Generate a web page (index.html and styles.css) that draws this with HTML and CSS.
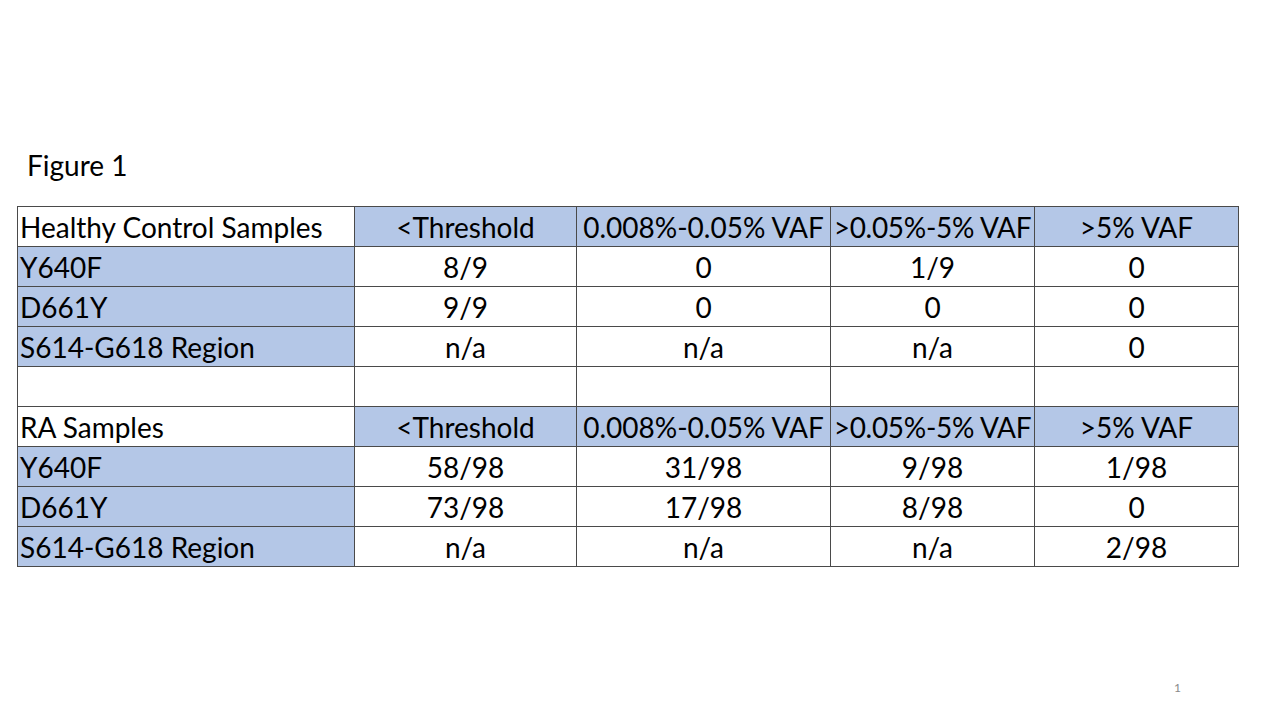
FILE: index.html
```html
<!DOCTYPE html>
<html>
<head>
<meta charset="utf-8">
<link rel="stylesheet" href="styles.css">
</head>
<body>
<div class="slide">
  <div class="title">Figure 1</div>
  <table class="data">
    <colgroup>
      <col class="c1"><col class="c2"><col class="c3"><col class="c4"><col class="c5">
    </colgroup>
    <tr class="head"><td class="lbl white">Healthy Control Samples</td><td class="blue">&lt;Threshold</td><td class="blue">0.008%-0.05% VAF</td><td class="blue tight">&gt;0.05%-5% VAF</td><td class="blue">&gt;5% VAF</td></tr>
    <tr><td class="lbl blue">Y640F</td><td>8/9</td><td>0</td><td>1/9</td><td>0</td></tr>
    <tr><td class="lbl blue">D661Y</td><td>9/9</td><td>0</td><td>0</td><td>0</td></tr>
    <tr><td class="lbl blue">S614-G618 Region</td><td>n/a</td><td>n/a</td><td>n/a</td><td>0</td></tr>
    <tr><td class="lbl"></td><td></td><td></td><td></td><td></td></tr>
    <tr class="head"><td class="lbl white">RA Samples</td><td class="blue">&lt;Threshold</td><td class="blue">0.008%-0.05% VAF</td><td class="blue tight">&gt;0.05%-5% VAF</td><td class="blue">&gt;5% VAF</td></tr>
    <tr><td class="lbl blue">Y640F</td><td>58/98</td><td>31/98</td><td>9/98</td><td>1/98</td></tr>
    <tr><td class="lbl blue">D661Y</td><td>73/98</td><td>17/98</td><td>8/98</td><td>0</td></tr>
    <tr><td class="lbl blue">S614-G618 Region</td><td>n/a</td><td>n/a</td><td>n/a</td><td>2/98</td></tr>
  </table>
  <div class="pagenum">1</div>
</div>
</body>
</html>
```
FILE: styles.css
```css
html, body {
  margin: 0;
  padding: 0;
  background: #ffffff;
}
.slide {
  width: 1280px;
  height: 720px;
  position: relative;
  font-family: "Lato", "Open Sans", sans-serif;
  color: #000;
  padding-top: 149px;
  box-sizing: border-box;
}
.title {
  font-size: 28px;
  line-height: 32px;
  margin-left: 27px;
  height: 57px;
}
.data {
  border-collapse: collapse;
  margin-left: 17px;
  table-layout: fixed;
  width: 1221px;
}
.c1 { width: 337px; }
.c2 { width: 222px; }
.c3 { width: 254px; }
.c4 { width: 204px; }
.c5 { width: 204px; }
.data td {
  border: 1px solid #4a4a4a;
  height: 39px;
  padding: 0;
  font-size: 28px;
  text-align: center;
  vertical-align: middle;
  white-space: nowrap;
  line-height: 32px;
}
.data td.tight {
  letter-spacing: -0.3px;
}
.data td.lbl {
  text-align: left;
  padding-left: 2px;
}
.blue { background: #b4c7e7; }
.white { background: #ffffff; }
.pagenum {
  position: absolute;
  left: 1174px;
  top: 680px;
  font-size: 12px;
  color: #8a8a8a;
}
```
